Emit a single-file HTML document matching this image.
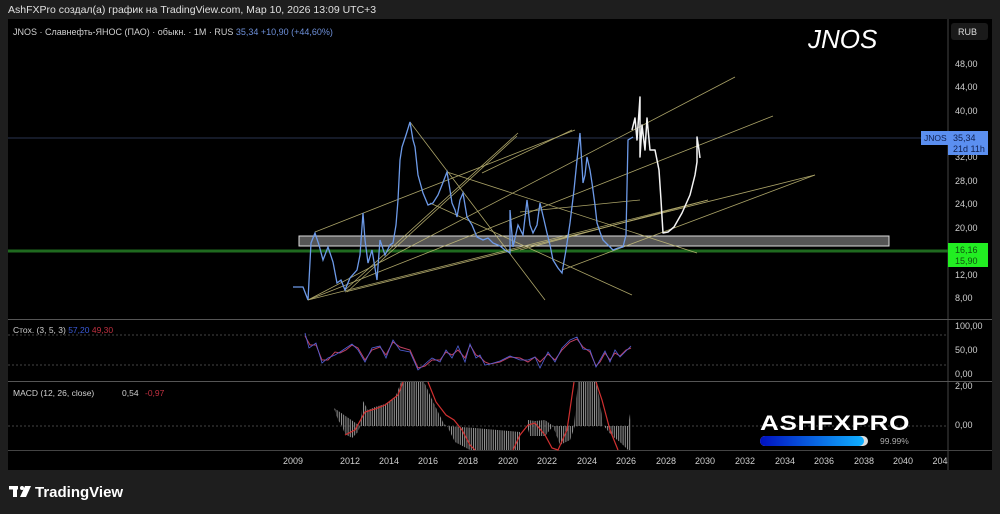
<!DOCTYPE html>
<html><head><meta charset="utf-8"><style>
html,body{margin:0;padding:0;background:#1e1e1e;width:1000px;height:514px;overflow:hidden;font-family:"Liberation Sans","DejaVu Sans",sans-serif}
svg{position:absolute;left:0;top:0}
text{font-family:"Liberation Sans","DejaVu Sans",sans-serif}
</style></head><body>
<svg width="1000" height="514" viewBox="0 0 1000 514">
<defs>
<linearGradient id="g" x1="0" x2="1"><stop offset="0" stop-color="#0010c0"/><stop offset="1" stop-color="#10b0ff"/></linearGradient>
<pattern id="bars" width="2.2" height="10" patternUnits="userSpaceOnUse"><rect x="0" y="0" width="1" height="10" fill="#9a9a9a"/></pattern>
</defs>
<rect x="0" y="0" width="1000" height="514" fill="#1e1e1e"/>
<text x="8" y="13" fill="#e0e0e0" font-size="10.5">AshFXPro создал(а) график на TradingView.com, Мар 10, 2026 13:09 UTC+3</text>
<rect x="8" y="19" width="984" height="451" fill="#000"/>
<line x1="948" y1="19" x2="948" y2="470" stroke="#444" stroke-width="1"/>
<line x1="8" y1="319.5" x2="992" y2="319.5" stroke="#555"/>
<line x1="8" y1="381.5" x2="992" y2="381.5" stroke="#555"/>
<line x1="8" y1="450.5" x2="992" y2="450.5" stroke="#444"/>
<text x="13" y="35" fill="#d0d0d0" font-size="9">JNOS · Славнефть-ЯНОС (ПАО) · обыкн. · 1M · RUS <tspan fill="#6d8fd8">35,34  +10,90 (+44,60%)</tspan></text>
<text x="808" y="48" fill="#fff" font-size="26" font-style="italic">JNOS</text>
<rect x="951" y="23" width="37" height="17" rx="3" fill="#1a1a1a"/>
<text x="958" y="35" fill="#ddd" font-size="9">RUB</text>
<g fill="#cfcfcf" font-size="9">
<text x="955" y="67">48,00</text><text x="955" y="90">44,00</text><text x="955" y="114">40,00</text>
<text x="955" y="160">32,00</text><text x="955" y="184">28,00</text><text x="955" y="207">24,00</text>
<text x="955" y="231">20,00</text><text x="955" y="278">12,00</text><text x="955" y="301">8,00</text>
<text x="955" y="329">100,00</text><text x="955" y="353">50,00</text><text x="955" y="377">0,00</text>
<text x="955" y="389">2,00</text><text x="955" y="428">0,00</text>
</g>
<line x1="8" y1="138" x2="948" y2="138" stroke="#2a3550" stroke-width="1"/>
<line x1="8" y1="251" x2="948" y2="251" stroke="#1f6a1f" stroke-width="3"/>
<rect x="299" y="236" width="590" height="10" fill="#555" stroke="#ddd" stroke-width="1"/>
<g stroke="#c9c07a" stroke-width="0.8" fill="none" opacity="0.85">
<line x1="308" y1="300" x2="735" y2="77"/>
<line x1="308" y1="300" x2="773" y2="116"/>
<line x1="308" y1="300" x2="708" y2="200"/>
<line x1="345" y1="292" x2="815" y2="175"/>
<line x1="315" y1="232" x2="575" y2="130"/>
<line x1="345" y1="290" x2="518" y2="133"/>
<line x1="347" y1="292" x2="517" y2="136"/>
<line x1="482" y1="173" x2="572" y2="130"/>
<line x1="410" y1="122" x2="545" y2="300"/>
<line x1="430" y1="203" x2="632" y2="295"/>
<line x1="447" y1="172" x2="697" y2="253"/>
<line x1="562" y1="270" x2="815" y2="175"/>
<line x1="520" y1="212" x2="640" y2="200"/>
<line x1="520" y1="250" x2="708" y2="200"/>
</g>
<polyline fill="none" stroke="#6d9ae8" stroke-width="1.3" points="293,287 303,287 308,300 311,243 315,233 319,245 323,260 328,247 333,262 337,283 341,280 345,290 350,278 357,270 360,255 363,213 365,240 368,263 372,250 377,280 380,240 385,255 390,245 393,243 396,225 398,200 400,160 402,147 406,135 410,122 413,140 415,147 418,175 423,193 428,205 433,203 438,195 442,185 447,172 450,190 452,203 455,210 457,217 460,200 463,193 465,205 467,217 472,225 477,237 483,240 488,238 493,243 500,246 505,250 510,253 510,210 513,247 518,225 523,235 527,200 530,225 533,233 537,225 540,203 544,220 547,233 550,245 553,260 558,268 562,273 566,250 570,223 574,190 577,160 580,133 583,183 585,175 587,157 590,170 592,183 595,205 597,223 600,232 603,240 608,245 613,250 618,248 623,247 626,235 628,140 633,137"/>
<polyline fill="none" stroke="#f4f4f4" stroke-width="1.5" stroke-linejoin="round" points="632,130 635,118 637,140 639,112 640,97 640,157 642,125 645,150 647,118 650,150 655,150 659,170 661,200 662,217 663,233 668,232 674,227 682,213 690,195 695,175 697,162 697,137 699,150 700,158"/>
<rect x="921" y="131" width="27" height="14" fill="#5b8ff0"/>
<text x="924" y="141" fill="#102050" font-size="8.5">JNOS</text>
<rect x="948" y="131" width="40" height="24" fill="#5b8ff0"/>
<text x="953" y="141" fill="#102050" font-size="9">35,34</text>
<text x="953" y="152" fill="#102050" font-size="9">21d 11h</text>
<rect x="948" y="243" width="40" height="24" fill="#22ee22"/>
<text x="955" y="253" fill="#105010" font-size="9">16,16</text>
<text x="955" y="264" fill="#105010" font-size="9">15,90</text>
<text x="13" y="333" fill="#d0d0d0" font-size="8.5">Стох. (3, 5, 3) <tspan fill="#3a5ad8">57,20</tspan> <tspan fill="#c03040">49,30</tspan></text>
<line x1="8" y1="335" x2="948" y2="335" stroke="#444" stroke-dasharray="2,2"/>
<line x1="8" y1="365" x2="948" y2="365" stroke="#444" stroke-dasharray="2,2"/>
<polyline fill="none" stroke="#c04060" stroke-width="1" points="305,336 310,345 316,345 322,360 328,360 335,352 340,353 346,350 352,345 358,348 365,360 372,350 380,347 386,355 393,342 400,347 410,350 418,368 425,366 432,360 440,360 446,352 452,355 458,350 465,358 470,345 476,355 480,357 485,362 490,364 500,362 510,357 520,358 528,362 535,357 540,362 548,354 555,360 562,350 570,342 577,339 583,347 590,352 596,366 600,362 605,353 610,360 615,353 620,356 626,350 631,348"/>
<polyline fill="none" stroke="#5060d8" stroke-width="0.8" points="305,333 309,348 316,343 322,363 328,358 335,355 340,352 346,348 352,344 358,350 365,362 372,348 380,346 386,358 393,340 400,350 410,352 418,370 425,364 432,358 440,362 446,350 452,358 458,346 465,362 470,344 476,358 480,355 485,365 490,364 500,361 510,356 520,360 528,360 535,357 540,368 548,352 555,362 562,348 570,340 577,337 583,349 590,350 596,367 600,360 605,351 610,362 615,350 620,357 626,351 631,346"/>
<text x="13" y="396" fill="#d0d0d0" font-size="8.5">MACD (12, 26, close)</text>
<text x="122" y="396" fill="#d0d0d0" font-size="8.5">0,54</text>
<text x="145" y="396" fill="#c03040" font-size="8.5">-0,97</text>
<line x1="8" y1="426" x2="948" y2="426" stroke="#444" stroke-dasharray="2,2"/>
<path fill="url(#bars)" d="M334,408 L338,420 L342,426 L360,426 L363,401 L368,410 L375,407 L385,404 L395,398 L401,382 L424,382 L430,395 L437,410 L444,424 L447,426 L527,426 L528,420 L535,421 L545,420 L553,426 L574,426 L578,382 L597,382 L601,410 L603,426 L628,426 L630,414 L631,426 L631,450 L628,450 L620,442 L612,436 L604,426 L575,426 L570,440 L560,445 L553,426 L545,436 L530,436 L527,426 L447,426 L455,442 L470,450 L520,450 L520,432 L475,428 L447,426 L342,426 L345,434 L352,438 L358,432 L360,426 Z"/>
<polyline fill="none" stroke="#d03030" stroke-width="1.2" points="345,435 355,430 365,412 375,409 385,405 398,395 403,382"/>
<polyline fill="none" stroke="#d03030" stroke-width="1.2" points="428,382 436,402 446,415 454,420 462,430 470,445 475,450"/>
<polyline fill="none" stroke="#d03030" stroke-width="1.2" points="513,450 520,435 528,425 535,423 545,435 552,448 558,450 567,430 574,382"/>
<polyline fill="none" stroke="#d03030" stroke-width="1.2" points="596,382 602,400 610,430 618,450"/>
<text x="760" y="430" fill="#fff" font-size="21" font-weight="bold" letter-spacing="0.5" textLength="150" lengthAdjust="spacingAndGlyphs">ASHFXPRO</text>
<rect x="760" y="436" width="108" height="10" rx="5" fill="#ddd"/>
<rect x="760" y="436" width="104" height="10" rx="5" fill="url(#g)"/>
<text x="880" y="444" fill="#aaa" font-size="8.5">99.99%</text>
<g fill="#cfcfcf" font-size="9" text-anchor="middle">
<text x="293" y="464">2009</text><text x="350" y="464">2012</text><text x="389" y="464">2014</text><text x="428" y="464">2016</text><text x="468" y="464">2018</text><text x="508" y="464">2020</text><text x="547" y="464">2022</text><text x="587" y="464">2024</text><text x="626" y="464">2026</text><text x="666" y="464">2028</text><text x="705" y="464">2030</text><text x="745" y="464">2032</text><text x="785" y="464">2034</text><text x="824" y="464">2036</text><text x="864" y="464">2038</text><text x="903" y="464">2040</text><text x="940" y="464">204</text>
</g>
<g fill="#fff">
<rect x="9" y="486" width="9" height="3.5"/><rect x="13" y="486" width="4" height="11"/>
<circle cx="22" cy="488" r="2"/><path d="M25,486 L31,486 L26,497 L20,497 Z"/>
</g>
<text x="35" y="497" fill="#fff" font-size="15" font-weight="bold">TradingView</text>
</svg>
</body></html>
